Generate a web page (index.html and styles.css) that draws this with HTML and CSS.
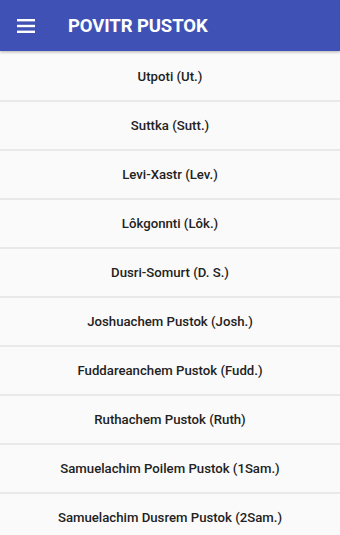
FILE: index.html
```html
<!DOCTYPE html>
<html>
<head>
<meta charset="utf-8">
<link rel="stylesheet" href="styles.css">
</head>
<body>
<header class="appbar">
  <svg class="menu" width="18" height="14" viewBox="0 0 18 14"><rect x="0" y="0" width="18" height="2.4" fill="#fff"/><rect x="0" y="5.8" width="18" height="2.4" fill="#fff"/><rect x="0" y="11.6" width="18" height="2.4" fill="#fff"/></svg>
  <h1 class="title">POVITR PUSTOK</h1>
</header>
<ul class="list">
  <li class="item">Utpoti (Ut.)</li>
  <li class="item">Suttka (Sutt.)</li>
  <li class="item">Levi-Xastr (Lev.)</li>
  <li class="item">Lôkgonnti (Lôk.)</li>
  <li class="item">Dusri-Somurt (D. S.)</li>
  <li class="item">Joshuachem Pustok (Josh.)</li>
  <li class="item">Fuddareanchem Pustok (Fudd.)</li>
  <li class="item">Ruthachem Pustok (Ruth)</li>
  <li class="item">Samuelachim Poilem Pustok (1Sam.)</li>
  <li class="item">Samuelachim Dusrem Pustok (2Sam.)</li>
</ul>
</body>
</html>
```
FILE: styles.css
```css
html, body {
  margin: 0;
  padding: 0;
  background: #fafafa;
  font-family: Roboto, "Noto Sans", sans-serif;
  overflow: hidden;
}
.appbar {
  position: relative;
  z-index: 1;
  height: 51px;
  background: #3f51b5;
  display: flex;
  align-items: center;
  padding-left: 17px;
  box-shadow: 0 1px 3px rgba(0,0,0,0.3);
}
.menu {
  display: block;
  flex: none;
  margin-top: 1px;
}
.title {
  margin: 1px 0 0 33px;
  color: #fff;
  font-size: 18.5px;
  font-weight: 700;
  letter-spacing: -0.1px;
}
.list {
  list-style: none;
  margin: 0;
  padding: 1.5px 0 0;
}
.item {
  height: 47.1px;
  display: flex;
  align-items: center;
  justify-content: center;
  border-bottom: 2px solid #e9e9e9;
  color: #222;
  font-size: 13.2px;
  font-weight: 500;
}
```
